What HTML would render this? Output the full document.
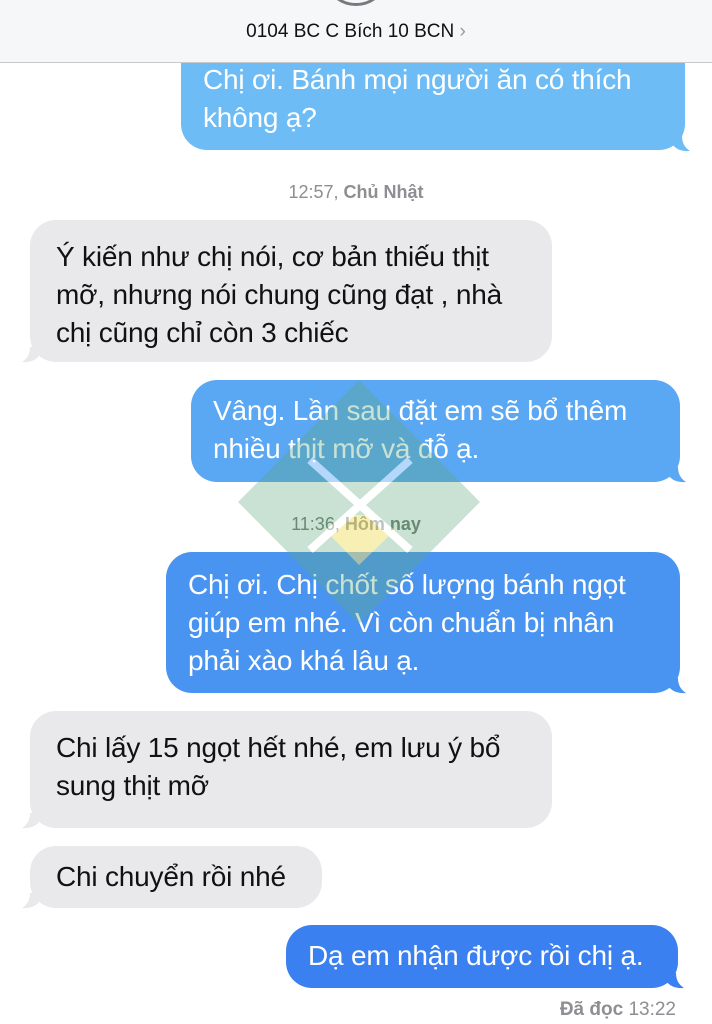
<!DOCTYPE html>
<html><head><meta charset="utf-8"><style>
body{margin:0;width:712px;height:1024px;background:#fff;position:relative;overflow:hidden;font-family:"Liberation Sans",sans-serif;}
.hdr{position:absolute;left:0;top:0;width:712px;height:62px;background:#f6f7f8;border-bottom:1px solid #c9c9cc;z-index:2}
.av{position:absolute;left:323px;top:-60px;width:60px;height:60px;border:3px solid #7a7a7e;border-radius:50%;}
.ttl{position:absolute;top:21px;width:712px;text-align:center;font-size:19px;color:#111;}
.b{position:absolute;border-radius:26px;font-size:28px;line-height:38px;white-space:nowrap;box-sizing:border-box;padding:0 22px;letter-spacing:-0.2px}
.o{color:#fff}
.i{background:#e9e9eb;color:#111}
.ts{position:absolute;width:712px;text-align:center;font-size:18px;color:#8e8e93}
.ts b{font-weight:bold}
.tr,.tl{position:absolute;width:18px;height:16px;}
</style></head><body>
<div class="hdr"><div class="av"></div><div class="ttl">0104 BC C Bích 10 BCN <span style="color:#999">›</span></div></div>

<div class="b o" style="left:181px;top:48px;width:504px;height:102px;padding-top:13px;background:#6dbcf5;border-top-left-radius:0;border-top-right-radius:0;">Chị ơi. Bánh mọi người ăn có thích<br>không ạ?</div>
<svg class="tr" style="left:672px;top:136px" viewBox="0 0 18 16"><path d="M0 0 L10 0 Q10 10 18 15 Q6 16 0 8Z" fill="#6dbcf5"/></svg>

<div class="ts" style="top:182px">12:57, <b>Chủ Nhật</b></div>

<div class="b i" style="left:30px;top:220px;width:522px;height:142px;padding:18px 26px">Ý kiến như chị nói, cơ bản thiếu thịt<br>mỡ, nhưng nói chung cũng đạt , nhà<br>chị cũng chỉ còn 3 chiếc</div>
<svg class="tl" style="left:22px;top:347px" viewBox="0 0 18 16"><path d="M18 0 L8 0 Q8 10 0 15 Q12 16 18 8Z" fill="#e9e9eb"/></svg>

<div class="b o" style="left:191px;top:380px;width:489px;height:102px;padding:12px 22px;background:#5aa7f4">Vâng. Lần sau đặt em sẽ bổ thêm<br>nhiều thịt mỡ và đỗ ạ.</div>
<svg class="tr" style="left:668px;top:467px" viewBox="0 0 18 16"><path d="M0 0 L10 0 Q10 10 18 15 Q6 16 0 8Z" fill="#5aa7f4"/></svg>

<div class="ts" style="top:514px;color:#6d7a72">11:36, <b>Hôm nay</b></div>

<div class="b o" style="left:166px;top:552px;width:514px;height:141px;padding:14px 22px;background:#4a94f1">Chị ơi. Chị chốt số lượng bánh ngọt<br>giúp em nhé. Vì còn chuẩn bị nhân<br>phải xào khá lâu ạ.</div>
<svg class="tr" style="left:668px;top:678px" viewBox="0 0 18 16"><path d="M0 0 L10 0 Q10 10 18 15 Q6 16 0 8Z" fill="#4a94f1"/></svg>

<svg style="position:absolute;left:230px;top:380px;opacity:0.55" width="258" height="260" viewBox="0 0 258 260">
<polygon points="129,0 250,122 129,244 8,122" fill="#5fa87a" opacity="0.6"/>
<path d="M95 150 Q129 120 165 150 L129 185Z" fill="#f3e27a"/>
<line x1="80" y1="80" x2="180" y2="170" stroke="#fff" stroke-width="8"/>
<line x1="180" y1="80" x2="80" y2="170" stroke="#fff" stroke-width="8"/>
</svg>

<div class="b i" style="left:30px;top:711px;width:522px;height:117px;padding:18px 26px">Chi lấy 15 ngọt hết nhé, em lưu ý bổ<br>sung thịt mỡ</div>
<svg class="tl" style="left:22px;top:813px" viewBox="0 0 18 16"><path d="M18 0 L8 0 Q8 10 0 15 Q12 16 18 8Z" fill="#e9e9eb"/></svg>

<div class="b i" style="left:30px;top:846px;width:292px;height:62px;padding:12px 26px">Chi chuyển rồi nhé</div>
<svg class="tl" style="left:22px;top:893px" viewBox="0 0 18 16"><path d="M18 0 L8 0 Q8 10 0 15 Q12 16 18 8Z" fill="#e9e9eb"/></svg>

<div class="b o" style="left:286px;top:925px;width:392px;height:63px;padding:12px 22px;background:#3b80f0">Dạ em nhận được rồi chị ạ.</div>
<svg class="tr" style="left:666px;top:973px" viewBox="0 0 18 16"><path d="M0 0 L10 0 Q10 10 18 15 Q6 16 0 8Z" fill="#3b80f0"/></svg>

<div style="position:absolute;right:36px;top:999px;font-size:19px;color:#8e8e93"><b>Đã đọc</b> 13:22</div>
</body></html>
